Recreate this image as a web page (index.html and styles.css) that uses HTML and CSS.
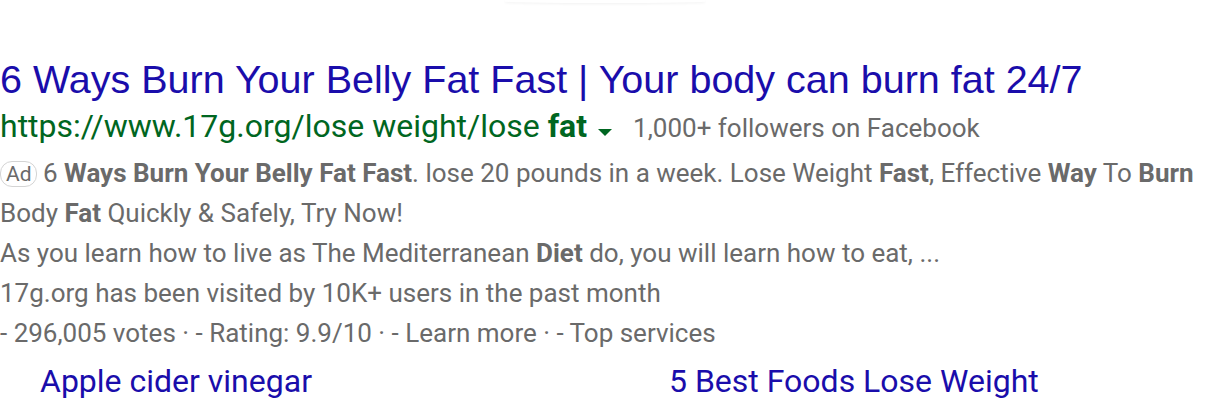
FILE: index.html
```html
<!DOCTYPE html>
<html lang="en">
<head>
<meta charset="utf-8">
<title>Ad result</title>
<link rel="stylesheet" href="styles.css">
</head>
<body>
<div class="top-shadow"></div>
<div class="result">
  <a class="title" href="#">6 Ways Burn Your Belly Fat Fast | Your body can burn fat 24/7</a>
  <div class="url-row">
    <span class="url">https://www.17g.org/lose weight/lose <b>fat</b></span><span class="caret"></span><span class="followers">1,000+ followers on Facebook</span>
  </div>
  <div class="desc">
    <p><span class="ad">Ad</span> 6 <b>Ways Burn Your Belly Fat Fast</b>. lose 20 pounds in a week. Lose Weight <b>Fast</b>, Effective <b>Way</b> To <b>Burn</b> Body <b>Fat</b> Quickly &amp; Safely, Try Now!</p>
    <p>As you learn how to live as The Mediterranean <b>Diet</b> do, you will learn how to eat, ...</p>
    <p>17g.org has been visited by 10K+ users in the past month</p>
    <p>- 296,005 votes · - Rating: 9.9/10 · - Learn more · - Top services</p>
  </div>
  <div class="sitelinks">
    <a href="#">Apple cider vinegar</a>
    <a href="#">5 Best Foods Lose Weight</a>
  </div>
</div>
</body>
</html>
```
FILE: styles.css
```css
html, body { margin: 0; padding: 0; background: #fff; }
body { font-family: Roboto, "Liberation Sans", Arial, sans-serif; }
.top-shadow {
  width: 200px; height: 3px; margin-left: 505px;
  border-radius: 0 0 50% 50%;
  box-shadow: 0 1px 3px rgba(0,0,0,0.06);
}
.result { padding-top: 54px; }
.title {
  display: block; color: #1a0dab; text-decoration: none;
  font-family: "Liberation Sans", Arial, sans-serif;
  font-size: 39.5px; line-height: 44px; white-space: nowrap;
}
.url-row { padding-top: 4px; line-height: 42px; white-space: nowrap; }
.url { color: #006621; font-size: 32px; }
.url b { font-weight: 700; }
.caret {
  display: inline-block; vertical-align: middle;
  width: 0; height: 0; margin: 0 21px 0 11px;
  border-left: 7px solid transparent; border-right: 7px solid transparent;
  border-top: 7px solid #006621;
}
.followers { color: #6a6a6a; font-size: 26px; }
.desc { color: #6a6a6a; font-size: 26px; line-height: 40px; }
.desc p { margin: 0; }
.desc b { font-weight: 700; }
.ad {
  display: inline-block; vertical-align: 1px; font-size: 21px; line-height: 24px;
  padding: 0 4px 0 5px; border: 1px solid #d4d4d4; border-radius: 12px;
  color: #6a6a6a;
}
.sitelinks { display: grid; grid-template-columns: 629px 1fr; padding-left: 40px; margin-top: 6px; }
.sitelinks a { color: #1a0dab; text-decoration: none; font-size: 32px; line-height: 44px; }
```
